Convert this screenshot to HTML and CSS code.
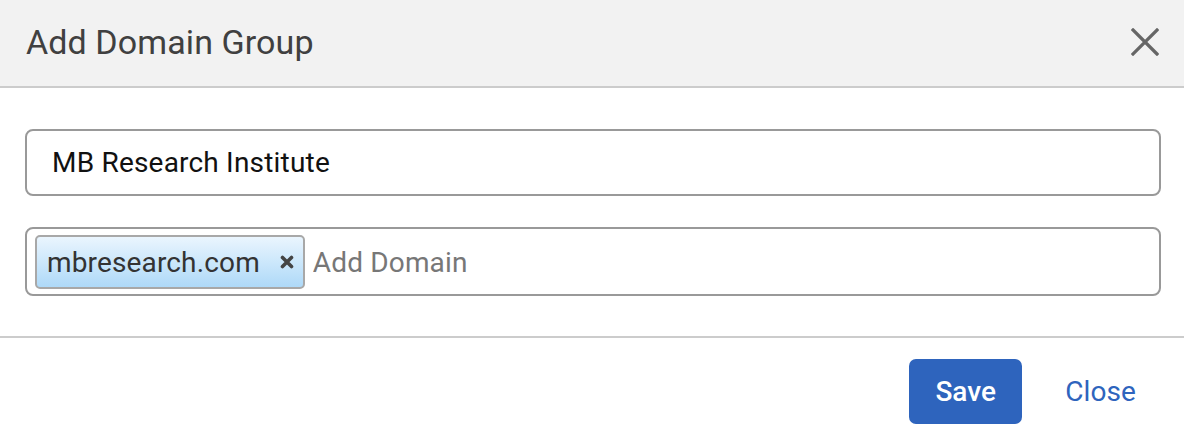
FILE: index.html
```html
<!DOCTYPE html>
<html lang="en">
<head>
<meta charset="utf-8">
<title>Add Domain Group</title>
<link rel="stylesheet" href="styles.css">
</head>
<body>
<div class="modal">
  <header class="modal-header">
    <h1 class="modal-title">Add Domain Group</h1>
    <button class="icon-close" type="button" aria-label="Close">
      <svg viewBox="0 0 28 28" width="28" height="28"><path d="M2 2 L26 26 M26 2 L2 26" stroke="#666" stroke-width="3.2" stroke-linecap="square" fill="none"/></svg>
    </button>
  </header>
  <div class="modal-body">
    <div class="field">
      <input class="text-input" type="text" value="MB Research Institute">
    </div>
    <div class="field tag-input">
      <span class="tag">mbresearch.com<svg class="tag-remove" viewBox="0 0 14 14" width="14" height="14" aria-label="Remove"><path d="M2.5 2.5 L11.5 11.5 M11.5 2.5 L2.5 11.5" stroke="#444" stroke-width="3.6" stroke-linecap="round" fill="none"/></svg></span>
      <input class="tag-entry" type="text" placeholder="Add Domain">
    </div>
  </div>
  <footer class="modal-footer">
    <button class="btn-primary" type="button">Save</button>
    <button class="btn-link" type="button">Close</button>
  </footer>
</div>
</body>
</html>
```

FILE: styles.css
```css
* { box-sizing: border-box; }
html, body {
  margin: 0;
  padding: 0;
  background: #fff;
  font-family: Roboto, "Liberation Sans", Arial, sans-serif;
}
.modal {
  width: 1184px;
  height: 436px;
  display: flex;
  flex-direction: column;
}
.modal-header {
  height: 88px;
  background: #f2f2f2;
  border-bottom: 2px solid #cccccc;
  display: flex;
  align-items: center;
  justify-content: space-between;
  padding: 0 25px 2px 26px;
}
.modal-title {
  margin: 0;
  font-size: 34px;
  font-weight: 400;
  color: #404040;
  letter-spacing: 0.1px;
}
.icon-close {
  background: none;
  border: 0;
  padding: 0;
  width: 28px;
  height: 28px;
  display: flex;
}
.modal-body {
  padding: 41px 23px 40px 25px;
  border-bottom: 2px solid #cccccc;
  display: flex;
  flex-direction: column;
  gap: 31px;
}
.field {
  border: 2px solid #999999;
  border-radius: 8px;
  background: #fff;
}
.text-input {
  display: block;
  width: 100%;
  height: 63px;
  border: 0;
  outline: none;
  background: transparent;
  padding: 0 0 0 25px;
  font: 400 28px Roboto, "Liberation Sans", Arial, sans-serif;
  letter-spacing: 0.2px;
  color: #111;
}
.tag-input {
  display: flex;
  align-items: center;
  padding: 6px 8px 5px 8px;
  height: 69px;
}
.tag {
  display: inline-flex;
  align-items: center;
  height: 54px;
  padding: 0 9px 0 10px;
  border: 2px solid #a8a8a8;
  border-radius: 5px;
  background: linear-gradient(to bottom, #eaf5fe 0%, #c9e6fb 55%, #aed9f8 100%);
  font-size: 28px;
  letter-spacing: 0.15px;
  color: #333;
}
.tag-remove {
  margin-left: 20px;
  display: block;
}
.tag-entry {
  flex: 1;
  border: 0;
  outline: none;
  background: transparent;
  margin-left: 8px;
  padding: 0;
  font: 400 28px Roboto, "Liberation Sans", Arial, sans-serif;
  letter-spacing: 0.15px;
  color: #111;
}
.tag-entry::placeholder {
  color: #777;
  opacity: 1;
}
.modal-footer {
  display: flex;
  justify-content: flex-end;
  align-items: flex-start;
  padding: 21px 24px 0 0;
}
.btn-primary {
  width: 113px;
  height: 65px;
  border: 0;
  border-radius: 7px;
  background: #2e64bd;
  color: #fff;
  font: 500 28px Roboto, "Liberation Sans", Arial, sans-serif;
  padding: 0;
}
.btn-link {
  height: 65px;
  border: 0;
  background: none;
  color: #2e64bd;
  font: 400 28px Roboto, "Liberation Sans", Arial, sans-serif;
  letter-spacing: 0.1px;
  padding: 0 24px;
  margin-left: 19px;
}
```
